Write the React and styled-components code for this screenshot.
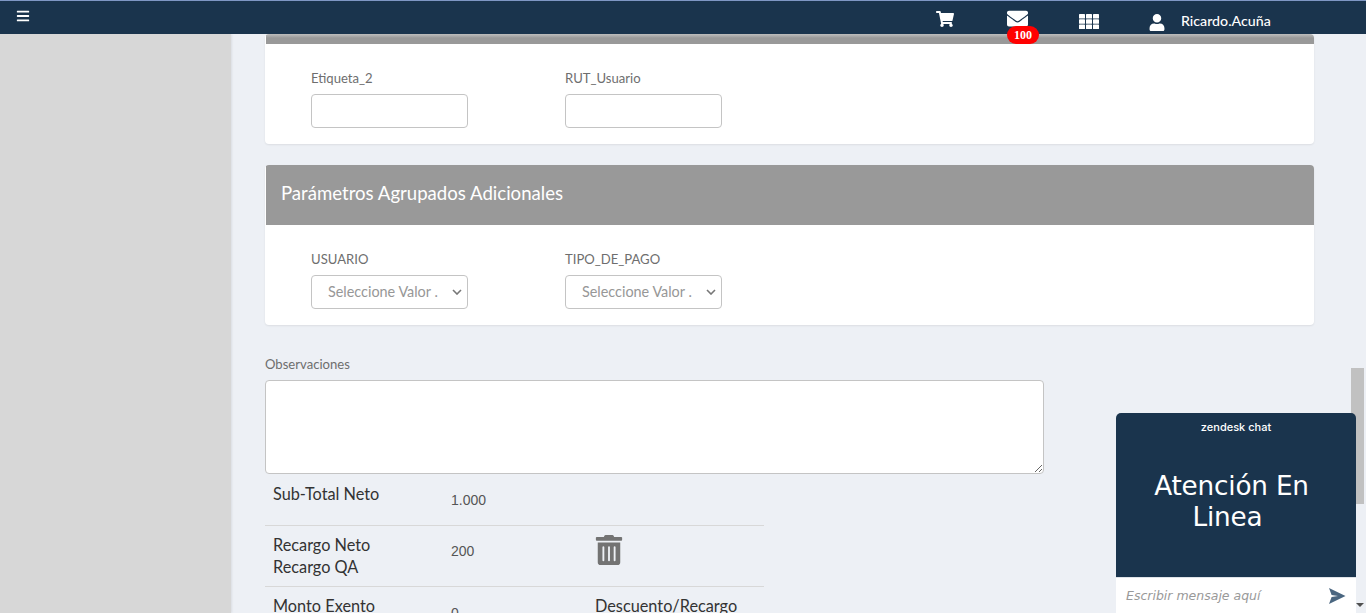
import React from 'react';
import styled, { createGlobalStyle } from 'styled-components';
import { FaBars, FaShoppingCart, FaEnvelope, FaUser, FaTrashAlt } from 'react-icons/fa';

const GlobalStyle = createGlobalStyle`
	html, body {
		margin: 0;
		height: 100%;
		overflow: hidden;
		background: #edf0f5;
		font-family: Lato, "Open Sans", sans-serif;
	}
	* { box-sizing: border-box; }
`;

const Page = styled.div`
	height: 613px;
	overflow: hidden;
	position: relative;
	display: flex;
	flex-direction: column;
`;

const TopBar = styled.header`
	flex: none;
	height: 34px;
	background: #1a344d;
	border-top: 1px solid #7f97c4;
	display: flex;
	align-items: center;
	padding-right: 90px;
	color: #fff;
	position: relative;
	z-index: 2;
`;

const MenuButton = styled.div`
	margin-left: 16px;
	margin-top: -3px;
	display: flex;
	font-size: 14px;
	flex: 1;
`;

const NavIcon = styled.div`
	position: relative;
	display: flex;
	justify-content: center;
	width: ${(props) => props.$width}px;
	margin-right: ${(props) => props.$gap}px;
	font-size: ${(props) => props.$size}px;
	margin-top: ${(props) => props.$top}px;
`;

const Badge = styled.span`
	position: absolute;
	left: 0;
	top: 18px;
	width: 32px;
	height: 18px;
	border-radius: 9px;
	background: #f00;
	color: #fff;
	font: bold 12px "Liberation Serif", serif;
	line-height: 18px;
	text-align: center;
`;

const UserName = styled.span`
	font-size: 14.2px;
	font-weight: 500;
	width: 95px;
	margin-top: 6px;
`;

const Body = styled.div`
	flex: 1;
	display: flex;
	min-height: 0;
`;

const Sidebar = styled.aside`
	width: 231px;
	flex: none;
	background: #d7d7d7;
	box-shadow: 1px 0 2px rgba(0, 0, 0, 0.08);
`;

const Main = styled.main`
	flex: 1;
	padding-left: 34px;
	width: 1135px;
`;

const Card = styled.section`
	width: 1049px;
	height: ${(props) => props.$height}px;
	margin-bottom: ${(props) => props.$gap}px;
	background: #fff;
	border-radius: 4px;
	box-shadow: 0 1px 2px rgba(0, 0, 0, 0.08);
	overflow: hidden;
`;

const CardHeader = styled.div`
	height: ${(props) => props.$height}px;
	background: #999;
	color: #fff;
	font-size: 18.6px;
	line-height: 57px;
	padding-left: 15px;
	margin-left: 1px;
	${(props) => props.$clipped && 'background: linear-gradient(#bdbdbd, #999 40%);'}
`;

const FieldRow = styled.div`
	display: flex;
	gap: 97px;
	padding: ${(props) => props.$top}px 0 0 46px;
`;

const Field = styled.div`
	width: 157px;
	display: flex;
	flex-direction: column;
`;

const Label = styled.label`
	font-size: 13.1px;
	line-height: 16px;
	color: #6e6e6e;
	margin-bottom: ${(props) => props.$gap}px;
`;

const TextInput = styled.input`
	width: 157px;
	height: 34px;
	border: 1px solid #c4c4c4;
	border-radius: 4px;
	background: #fff;
	outline: none;
`;

const FakeSelect = styled.div`
	width: 157px;
	height: 34px;
	border: 1px solid #c4c4c4;
	border-radius: 4px;
	background: #fff;
	display: flex;
	align-items: center;
	justify-content: space-between;
	padding: 0 5px 1px 16px;
	font-size: 14.4px;
	color: #979797;
	white-space: nowrap;
`;

const Observations = styled.div`
	margin-top: 31px;
	width: 779px;
	display: flex;
	flex-direction: column;
`;

const ObservationsLabel = styled(Label)`
	font-size: 13.1px;
	margin-bottom: 8px;
`;

const TextArea = styled.textarea`
	display: block;
	width: 779px;
	height: 94px;
	border: 1px solid #c4c4c4;
	border-radius: 4px;
	background: #fff;
	outline: none;
	margin: 0;
`;

const Totals = styled.div`
	width: 499px;
`;

const TotalRow = styled.div`
	display: grid;
	grid-template-columns: 178px 144px 1fr;
	height: ${(props) => props.$height}px;
	padding: 8px 0 0 8px;
	border-bottom: 1px solid ${(props) => (props.$last ? 'transparent' : '#d8d8d8')};
`;

const RowTitle = styled.div`
	font-size: 16.3px;
	line-height: 22px;
	color: #333;
	white-space: nowrap;
	margin-top: ${(props) => props.$shift || 0}px;
`;

const RowValue = styled.div`
	font: 14px/18px "Liberation Sans", Arial, sans-serif;
	color: #555;
	padding-top: ${(props) => props.$top}px;
`;

const TrashIcon = styled.div`
	font-size: 30px;
	line-height: 0;
	color: #737373;
	margin: 1px 0 0 -1px;
`;

const ScrollThumb = styled.div`
	position: absolute;
	left: 1351px;
	top: 368px;
	width: 13px;
	height: 136px;
	background: #c1c1c1;
`;

const ScrollArrow = styled.div`
	position: absolute;
	left: 1356px;
	top: 603px;
	border-left: 4px solid transparent;
	border-right: 4px solid transparent;
	border-top: 4px solid #505050;
`;

const Chat = styled.aside`
	position: absolute;
	left: 1116px;
	top: 413px;
	width: 240px;
	height: 200px;
	display: flex;
	flex-direction: column;
	border-radius: 5px 5px 0 0;
	overflow: hidden;
	background: #1a344d;
	color: #fff;
`;

const ChatBrand = styled.div`
	font: 500 11px/14px "Inter", sans-serif;
	text-align: center;
	padding-top: 7px;
`;

const ChatTitle = styled.div`
	flex: 1;
	font: 26.3px/31px "DejaVu Sans", sans-serif;
	text-align: center;
	padding: 37px 29px 0 20px;
	letter-spacing: -0.2px;
`;

const ChatInput = styled.div`
	height: 36px;
	background: #fff;
	border-top: 1px solid #dfe3e8;
	display: flex;
	align-items: center;
	justify-content: space-between;
	padding: 0 10px;
	font: italic 12.5px "DejaVu Sans", sans-serif;
	color: #999;
`;

const SendIcon = () => (
	<svg width="18" height="18" viewBox="0 0 18 18" aria-hidden="true">
		<path d="M1 1 L17.5 9 L1 17 L3.6 10 L10 9 L3.6 8 Z" fill="#4a6680" />
	</svg>
);

const Chevron = () => (
	<svg width="10" height="6" viewBox="0 0 10 6" aria-hidden="true">
		<path d="M1 1 L5 5 L9 1" fill="none" stroke="#777" strokeWidth="1.6" />
	</svg>
);

// the 3x3 grid is wider than tall in the reference, unlike FaTh
const GridIcon = () => (
	<svg width="20" height="15" viewBox="0 0 20 15" fill="#fff" aria-hidden="true">
		{[0, 5.2, 10.4].map((y) =>
			[0, 7, 14].map((x) => (
				<rect key={`${x}-${y}`} x={x} y={y} width="6" height="4.6" rx="0.6" />
			))
		)}
	</svg>
);

const App = () => (
	<Page>
		<GlobalStyle />
		<TopBar>
			<MenuButton><FaBars /></MenuButton>
			<NavIcon $width={20} $size={18} $gap={52} $top={3}><FaShoppingCart /></NavIcon>
			<NavIcon $width={21} $size={21} $gap={50} $top={2}>
				<FaEnvelope />
				<Badge>100</Badge>
			</NavIcon>
			<NavIcon $width={21} $size={15} $gap={50} $top={8}><GridIcon /></NavIcon>
			<NavIcon $width={16} $size={17} $gap={16} $top={10}><FaUser /></NavIcon>
			<UserName>Ricardo.Acuña</UserName>
		</TopBar>
		<Body>
			<Sidebar />
			<Main>
				<Card $height={110} $gap={21}>
					<CardHeader $height={10} $clipped />
					<FieldRow $top={26}>
						<Field>
							<Label $gap={8}>Etiqueta_2</Label>
							<TextInput />
						</Field>
						<Field>
							<Label $gap={8}>RUT_Usuario</Label>
							<TextInput />
						</Field>
					</FieldRow>
				</Card>
				<Card $height={160} $gap={0}>
					<CardHeader $height={60}>Parámetros Agrupados Adicionales</CardHeader>
					<FieldRow $top={26}>
						<Field>
							<Label $gap={8}>USUARIO</Label>
							<FakeSelect>Seleccione Valor .<Chevron /></FakeSelect>
						</Field>
						<Field>
							<Label $gap={8}>TIPO_DE_PAGO</Label>
							<FakeSelect>Seleccione Valor .<Chevron /></FakeSelect>
						</Field>
					</FieldRow>
				</Card>
				<Observations>
					<ObservationsLabel>Observaciones</ObservationsLabel>
					<TextArea />
				</Observations>
				<Totals>
					<TotalRow $height={52}>
						<RowTitle $shift={1}>Sub-Total Neto</RowTitle>
						<RowValue $top={9}>1.000</RowValue>
					</TotalRow>
					<TotalRow $height={61}>
						<RowTitle>Recargo Neto<br />Recargo QA</RowTitle>
						<RowValue $top={8}>200</RowValue>
						<TrashIcon><FaTrashAlt /></TrashIcon>
					</TotalRow>
					<TotalRow $height={60} $last>
						<RowTitle>Monto Exento</RowTitle>
						<RowValue $top={9}>0</RowValue>
						<RowTitle>Descuento/Recargo</RowTitle>
					</TotalRow>
				</Totals>
			</Main>
		</Body>
		<ScrollThumb />
		<ScrollArrow />
		<Chat>
			<ChatBrand>zendesk chat</ChatBrand>
			<ChatTitle>Atención En Linea{'\u00a0'}</ChatTitle>
			<ChatInput>
				Escribir mensaje aquí
				<SendIcon />
			</ChatInput>
		</Chat>
	</Page>
);

export default App;
